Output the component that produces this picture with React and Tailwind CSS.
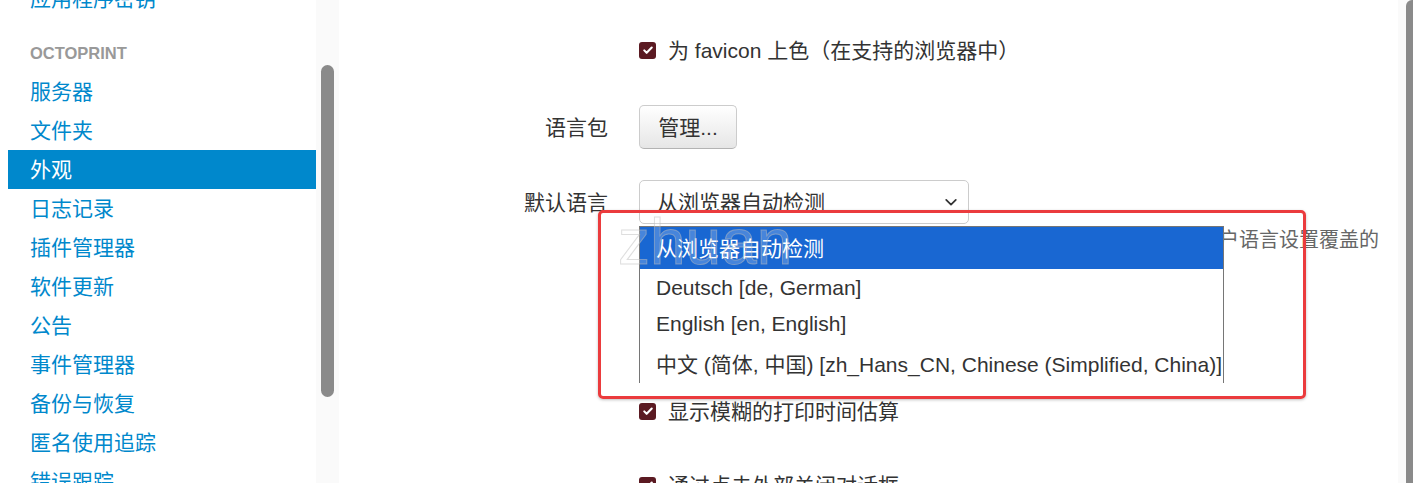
import React from "react";

const navItems = [
  "服务器",
  "文件夹",
  "外观",
  "日志记录",
  "插件管理器",
  "软件更新",
  "公告",
  "事件管理器",
  "备份与恢复",
  "匿名使用追踪",
  "错误跟踪",
];

const languages = [
  { label: "从浏览器自动检测", active: true },
  { label: "Deutsch [de, German]" },
  { label: "English [en, English]" },
  { label: "中文 (简体, 中国) [zh_Hans_CN, Chinese (Simplified, China)]" },
];

function Checkbox() {
  return (
    <span className="flex h-[17px] w-[17px] shrink-0 items-center justify-center rounded-[3px] bg-[#5b1a22]">
      <svg viewBox="0 0 16 16" className="h-[12px] w-[12px]">
        <path d="M3 8.5l3.2 3.2L13 4.8" fill="none" stroke="white" strokeWidth="2.8" strokeLinecap="round" strokeLinejoin="round" />
      </svg>
    </span>
  );
}

function Sidebar() {
  return (
    <div className="w-[316px] shrink-0 bg-white">
      <div className="-mt-[21px] ml-2">
        <div className="flex h-[39px] items-center pl-[22px] text-[#0088cc]">应用程序密钥</div>
        <div className="mt-[25px] mb-[9px] flex h-[20px] items-center pl-[22px] text-[16.5px] font-bold text-[#999]">OCTOPRINT</div>
        {navItems.map((item) => (
          <div
            key={item}
            className={
              item === "外观"
                ? "flex h-[39px] items-center bg-[#0088cc] pl-[22px] text-white"
                : "flex h-[39px] items-center pl-[22px] text-[#0088cc]"
            }
          >
            {item}
          </div>
        ))}
      </div>
    </div>
  );
}

function FormRow({ label, children, className }) {
  return (
    <div className={"flex items-center " + className}>
      <div className="w-[269px] shrink-0 text-right text-[#333]">{label}</div>
      <div className="ml-[31px] flex items-center">{children}</div>
    </div>
  );
}

export default function App() {
  return (
    <div className="relative flex h-[483px] w-full overflow-hidden bg-white font-['Liberation_Sans','Noto_Sans_CJK_SC',sans-serif] text-[21px] leading-none">
      <Sidebar />

      {/* sidebar scrollbar */}
      <div className="w-[23px] shrink-0 bg-[#fafafa] pt-[65px] pl-[5px]">
        <div className="h-[332px] w-[13px] rounded-full bg-[#8a8a8a]" />
      </div>

      <div className="flex-1 bg-white text-[#333]">
        <FormRow className="mt-[28px] h-[44px]">
          <Checkbox />
          <span className="ml-[12px]">为 favicon 上色（在支持的浏览器中）</span>
        </FormRow>

        <FormRow label="语言包" className="mt-[33px] h-[44px]">
          <button className="h-[44px] w-[98px] rounded-[5px] border border-[#ccc] border-b-[#b3b3b3] bg-gradient-to-b from-white to-[#e6e6e6] text-[#333]">
            管理...
          </button>
        </FormRow>

        <FormRow label="默认语言" className="mt-[31px] h-[44px]">
          <div className="flex h-[44px] w-[330px] items-center justify-between rounded-[5px] border border-[#ccc] bg-white pl-[17px] pr-[10px]">
            <span>从浏览器自动检测</span>
            <svg viewBox="0 0 16 16" className="h-[14px] w-[14px]">
              <path d="M2.5 5.5L8 11l5.5-5.5" fill="none" stroke="#333" strokeWidth="2" strokeLinecap="round" strokeLinejoin="round" />
            </svg>
          </div>
        </FormRow>

        <p className="mt-[1px] ml-[300px] w-[750px] text-[20px] leading-[30px] text-[#666]">
          界面默认使用的语言。此设置可以被每个用户在其个人设置中的用户语言设置覆盖的默认语言
        </p>

        <FormRow className="mt-[104px] h-[44px]">
          <Checkbox />
          <span className="ml-[12px]">显示模糊的打印时间估算</span>
        </FormRow>

        <FormRow className="mt-[30px] h-[44px]">
          <Checkbox />
          <span className="ml-[12px]">通过点击外部关闭对话框</span>
        </FormRow>
      </div>

      {/* page scrollbar */}
      <div className="w-[15px] shrink-0 bg-[#fafafa] pl-[8px]">
        <div className="h-[600px] w-[12px] rounded-t-full bg-[#8a8a8a]" />
      </div>

      {/* open select list */}
      <div className="absolute top-[226px] left-[639px] h-[157px] w-[585px] border-x border-t border-[#767676] bg-white text-[#333]">
        {languages.map((lang, i) => (
          <div
            key={lang.label}
            className={
              lang.active
                ? "flex h-[42px] items-center whitespace-nowrap bg-[#1967d2] pl-[16px] pt-[1px] text-white"
                : i === 3
                ? "flex h-[42px] items-center whitespace-nowrap pt-[4px] pl-[16px]"
                : "flex h-[36px] items-center whitespace-nowrap pl-[16px]"
            }
          >
            {lang.label}
          </div>
        ))}
      </div>

      {/* watermark */}
      <div className="pointer-events-none absolute top-[206px] left-[618px] font-['Liberation_Sans',sans-serif] text-[64px] leading-[72px] text-white/20 [-webkit-text-stroke:1px_rgba(190,190,190,0.5)]">
        zhuan
      </div>

      {/* annotation frame */}
      <div className="pointer-events-none absolute top-[210px] left-[598px] h-[189px] w-[708px] rounded-[5px] border-[3px] border-[#eb3b3d] shadow-[0_1px_3px_rgba(0,0,0,0.25)]" />
    </div>
  );
}
